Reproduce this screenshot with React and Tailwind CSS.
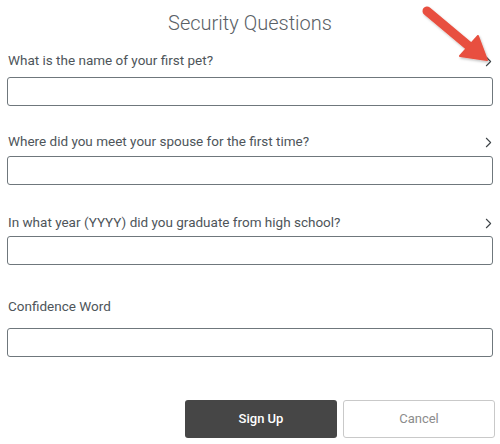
import { ChevronRight } from 'lucide-react';

const questions = [
  { label: 'What is the name of your first pet?', chevron: true, top: 'mt-0', gap: 'mt-[8px]' },
  { label: 'Where did you meet your spouse for the first time?', chevron: true, top: 'mt-[26px]', gap: 'mt-[6px]' },
  { label: 'In what year (YYYY) did you graduate from high school?', chevron: true, top: 'mt-[28px]', gap: 'mt-[5px]' },
  { label: 'Confidence Word', chevron: false, top: 'mt-[32px]', gap: 'mt-[13px]' },
];

function Arrow() {
  return (
    <svg className="pointer-events-none absolute left-0 top-0" width="500" height="80" viewBox="0 0 500 80">
      <defs>
        <filter id="sh" x="-20%" y="-20%" width="140%" height="140%">
          <feDropShadow dx="1" dy="1.5" stdDeviation="1.2" floodColor="#000" floodOpacity="0.25" />
        </filter>
      </defs>
      <g filter="url(#sh)" fill="#e8503f" stroke="#e8503f">
        <line x1="427" y1="11" x2="470" y2="47" strokeWidth="9" strokeLinecap="round" />
        <polygon points="487,60 478,36 460,56" strokeWidth="2" strokeLinejoin="round" />
      </g>
    </svg>
  );
}

export default function App() {
  return (
    <div className="relative h-[444px] w-[500px] overflow-hidden bg-white" style={{ fontFamily: 'Roboto, "Liberation Sans", sans-serif' }}>
      <div className="px-[7px] pt-[10px]">
        <h1 className="text-center text-[20px] font-light leading-[26px] text-[#5a6166]">Security Questions</h1>

        <div className="mt-[15px] flex flex-col">
          {questions.map((q) => (
            <div key={q.label} className={q.top}>
              <div className="flex h-[18px] items-center justify-between pl-[1px]">
                <span className="text-[13.5px] text-[#4e555a]">{q.label}</span>
                {q.chevron && <ChevronRight className="-mr-[4px] mt-[2px] h-[17px] w-[17px] text-[#3d4347]" strokeWidth={1.5} />}
              </div>
              <div className={`${q.gap} h-[29px] rounded-[3px] border border-[#6f777c] bg-white`} />
            </div>
          ))}
        </div>

        <div className="-mr-[2px] mt-[43px] flex justify-end gap-[6px]">
          <button className="h-[38px] w-[152px] rounded-[3px] bg-[#464646] text-[13px] font-medium text-white">Sign Up</button>
          <button className="h-[38px] w-[152px] rounded-[3px] border border-[#c9c9c9] bg-white text-[13px] text-[#8c8c8c]">Cancel</button>
        </div>
      </div>
      <Arrow />
    </div>
  );
}
